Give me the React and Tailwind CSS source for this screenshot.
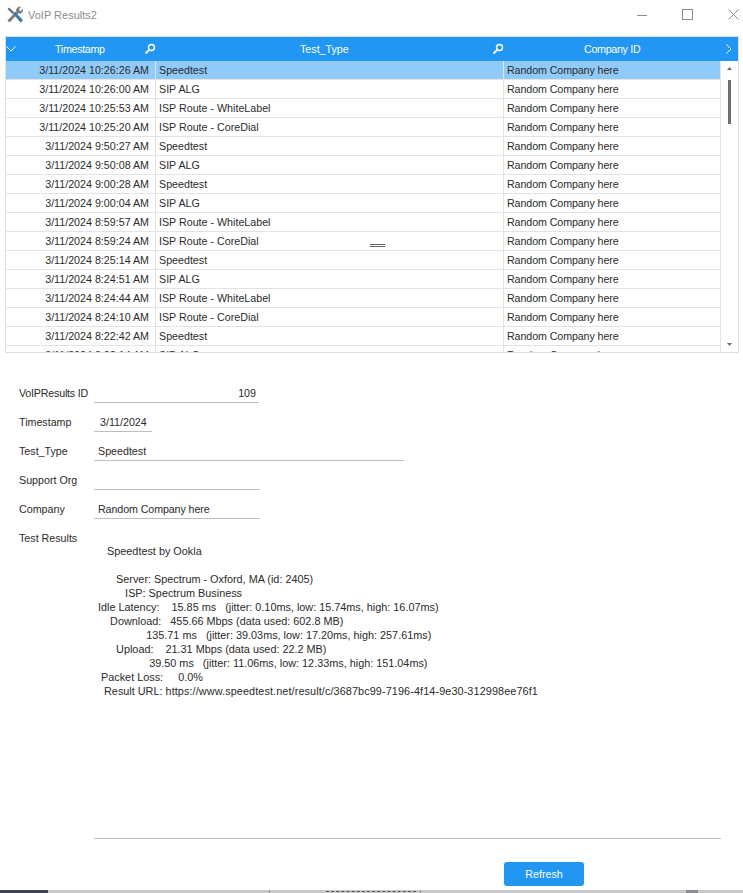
const rows = [
  ["3/11/2024 10:26:26 AM", "Speedtest"],
  ["3/11/2024 10:26:00 AM", "SIP ALG"],
  ["3/11/2024 10:25:53 AM", "ISP Route - WhiteLabel"],
  ["3/11/2024 10:25:20 AM", "ISP Route - CoreDial"],
  ["3/11/2024 9:50:27 AM", "Speedtest"],
  ["3/11/2024 9:50:08 AM", "SIP ALG"],
  ["3/11/2024 9:00:28 AM", "Speedtest"],
  ["3/11/2024 9:00:04 AM", "SIP ALG"],
  ["3/11/2024 8:59:57 AM", "ISP Route - WhiteLabel"],
  ["3/11/2024 8:59:24 AM", "ISP Route - CoreDial"],
  ["3/11/2024 8:25:14 AM", "Speedtest"],
  ["3/11/2024 8:24:51 AM", "SIP ALG"],
  ["3/11/2024 8:24:44 AM", "ISP Route - WhiteLabel"],
  ["3/11/2024 8:24:10 AM", "ISP Route - CoreDial"],
  ["3/11/2024 8:22:42 AM", "Speedtest"],
  ["3/11/2024 8:22:14 AM", "SIP ALG"],
];

const results = `   Speedtest by Ookla

      Server: Spectrum - Oxford, MA (id: 2405)
         ISP: Spectrum Business
Idle Latency:    15.85 ms   (jitter: 0.10ms, low: 15.74ms, high: 16.07ms)
    Download:   455.66 Mbps (data used: 602.8 MB)
                135.71 ms   (jitter: 39.03ms, low: 17.20ms, high: 257.61ms)
      Upload:    21.31 Mbps (data used: 22.2 MB)
                 39.50 ms   (jitter: 11.06ms, low: 12.33ms, high: 151.04ms)
 Packet Loss:     0.0%
  Result URL: `;

const SearchIcon = () => (
  <svg width="12" height="12" viewBox="0 0 12 12" fill="none" stroke="white">
    <circle cx="7.5" cy="4.5" r="3" strokeWidth="1.4" />
    <path d="M5.2 6.8 L1.5 10.5" strokeWidth="1.8" />
  </svg>
);

const ToolsIcon = () => (
  <svg width="18" height="18" viewBox="0 0 18 18" fill="none">
    <path d="M1.5 3 L3 1.5 L8 6 L6.5 8 Z" fill="#6e6e6e" />
    <path d="M2.5 15.5 L11.5 6" stroke="#7d7d7d" strokeWidth="3" />
    <path d="M10 5 C10 2 12.5 0.3 15 1 L12.8 3.4 L14.6 5.2 L17 2.8 C17.6 5.6 15.6 8 13 7.8 Z" fill="#7d7d7d" />
    <path d="M7 7.5 L9 5.8 L16.5 13.5 C17.2 14.5 15 17 14 16 Z" fill="#3f79ab" />
  </svg>
);

const Cell = ({ className, children }) => (
  <div className={`flex items-center h-full border-r border-[#e3e3e3] overflow-hidden whitespace-nowrap ${className}`}>
    {children}
  </div>
);

const Field = ({ label, value, width, right, labelClass = "" }) => (
  <div className="flex items-end h-[29px]">
    <div className={`w-[75px] pb-[3px] leading-[14px] whitespace-nowrap ${labelClass}`}>{label}</div>
    <div className={`h-[21px] border-b border-[#bdbdbd] leading-[14px] pt-[4px] ${width} ${right}`}>{value}</div>
  </div>
);

const App = () => {
  return (
    <div className="relative w-[743px] h-[893px] overflow-hidden bg-white text-[10.7px] text-[#2b2b2b] font-['Liberation_Sans',Arial,sans-serif]">
      <div className="flex items-start h-[36px] pl-[6px] pt-[6px]">
        <ToolsIcon />
        <span className="ml-[4px] mt-[3px] text-[11px] leading-[13px] text-[#8c8c8c]">VoIP Results2</span>
        <div className="ml-auto flex items-center mt-[3px]">
          <svg width="10" height="10" viewBox="0 0 10 10" className="mr-[35px]" stroke="#8c8c8c">
            <path d="M0 5.5 H10" />
          </svg>
          <svg width="11" height="11" viewBox="0 0 11 11" className="mr-[35px]" fill="none" stroke="#8c8c8c">
            <rect x="0.5" y="0.5" width="10" height="10" />
          </svg>
          <svg width="11" height="11" viewBox="0 0 11 11" className="mr-[4px]" stroke="#8c8c8c">
            <path d="M0.5 0.5 L10.5 10.5 M10.5 0.5 L0.5 10.5" />
          </svg>
        </div>
      </div>

      <div className="relative mx-[5px] h-[317px] w-[734px] overflow-hidden border border-[#dedede]">
        <div className="flex items-center h-[24px] bg-[#2196f3] text-white">
          <div className="flex items-center w-[149px] h-full">
            <svg width="10" height="6" viewBox="0 0 10 6" fill="none" stroke="white">
              <path d="M0.5 0.5 L5 5 L9.5 0.5" />
            </svg>
            <span className="ml-[39px] tracking-[-0.3px]">Timestamp</span>
            <span className="ml-auto mr-[-1px]"><SearchIcon /></span>
          </div>
          <div className="flex items-center w-[348px] h-full">
            <span className="ml-[145px]">Test_Type</span>
            <span className="ml-auto mr-[-1px]"><SearchIcon /></span>
          </div>
          <div className="flex items-center flex-1 h-full">
            <span className="ml-[81px] tracking-[-0.3px]">Company ID</span>
            <svg width="6" height="10" viewBox="0 0 6 10" fill="none" stroke="white" className="ml-auto mr-[6px]">
              <path d="M0.5 0.5 L5 5 L0.5 9.5" />
            </svg>
          </div>
        </div>

        <div className="flex">
          <div className="w-[714px] shrink-0">
            {rows.map(([time, type], i) => (
              <div
                key={time}
                className={`flex h-[19px] border-b border-[#e3e3e3] ${i === 0 ? "bg-[#90caf9]" : ""}`}
              >
                <Cell className="w-[150px] justify-end pr-[6px]">{time}</Cell>
                <Cell className="w-[348px] pl-[3px]">{type}</Cell>
                <div className="flex items-center flex-1 h-full pl-[3px] whitespace-nowrap tracking-[-0.1px]">Random Company here</div>
              </div>
            ))}
          </div>
          <div className="flex-1 flex flex-col items-center border-l border-[#e3e3e3]">
            <svg width="7" height="4" viewBox="0 0 7 4" className="mt-[6px]" fill="#6f6f6f">
              <path d="M3.5 0 L6 3 H1 Z" />
            </svg>
            <div className="mt-[9px] w-[3px] h-[44px] bg-[#6f6f6f]"></div>
            <svg width="7" height="4" viewBox="0 0 7 4" className="mt-[219px]" fill="#6f6f6f">
              <path d="M1 0 H6 L3.5 3 Z" />
            </svg>
          </div>
        </div>

        <div className="absolute left-[364px] top-[207px] w-[15px] h-[3px] border-y border-[#666]"></div>
      </div>

      <div className="pl-[19px] pt-[21px]">
        <Field label="VoIPResults ID" value="109" width="w-[165px]" right="text-right pr-[3px]" labelClass="tracking-[-0.2px]" />
        <Field label="Timestamp" value="3/11/2024" width="w-[58px]" right="pl-[6px]" />
        <Field label="Test_Type" value="Speedtest" width="w-[310px]" right="pl-[4px]" />
        <Field label="Support Org" value="" width="w-[166px]" right="" />
        <Field label="Company" value="Random Company here" width="w-[166px]" right="pl-[4px] tracking-[-0.1px]" />
        <div className="flex mt-[12px]">
          <div className="w-[75px] leading-[14px]">Test Results</div>
          <div className="w-[627px] h-[308px] border-b border-[#bdbdbd]">
            <pre className="pl-[4px] pt-[6px] mt-[7px] text-[10.85px] leading-[14px] font-['Liberation_Sans',Arial,sans-serif]">
              {results}
              <span className="tracking-[0.1px]">https://www.speedtest.net/result/c/3687bc99-7196-4f14-9e30-312998ee76f1</span>
            </pre>
          </div>
        </div>
        <div className="flex justify-end w-[565px] mt-[23px]">
          <button className="w-[80px] h-[24px] rounded-[3px] bg-[#2196f3] text-white">Refresh</button>
        </div>
      </div>

      <div className="absolute left-0 right-0 bottom-0 flex h-[3px] bg-[#c8c8c8]">
        <div className="w-[48px] bg-[#3c4650]"></div>
        <div className="ml-[221px] w-[152px] border-x border-[#8c8c8c]">
          <div className="ml-[56px] w-[90px] h-[2px] border-b border-dashed border-[#555]"></div>
        </div>
        <div className="ml-[265px] w-[12px] bg-[#8f8f99]"></div>
      </div>
    </div>
  );
};

export default App;
